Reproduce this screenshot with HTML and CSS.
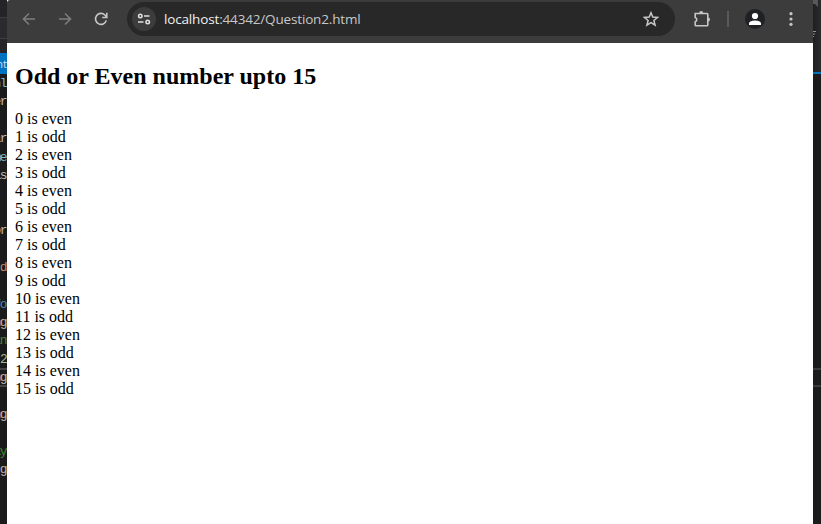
FILE: index.html
```html
<!DOCTYPE html>
<html lang="en">
<head>
<meta charset="utf-8">
<title>Question2</title>
<link rel="stylesheet" href="styles.css">
</head>
<body>
<div class="desktop">
  <div class="editor-left">
    <div class="editor-bars"></div>
    <div class="tab"><span>nt</span></div>
    <div class="code">
      <div class="line attr">nl</div>
      <div class="line">er</div>
      <div class="line"></div>
      <div class="line">ar</div>
      <div class="line attr">me</div>
      <div class="line">is</div>
      <div class="line"></div>
      <div class="line"></div>
      <div class="line">or</div>
      <div class="line"></div>
      <div class="line string">'d</div>
      <div class="line"></div>
      <div class="line keyword">fo</div>
      <div class="line">ng</div>
      <div class="line comment">in</div>
      <div class="line number">2</div>
      <div class="line current">ng</div>
      <div class="line"></div>
      <div class="line">ng</div>
      <div class="line"></div>
      <div class="line comment">ay</div>
      <div class="line">g</div>
    </div>
  </div>
  <div class="browser">
    <header class="toolbar">
      <svg class="icon back" viewBox="0 0 14 14"><path d="M13 7H2M7 1.5 1.5 7 7 12.5"/></svg>
      <svg class="icon forward" viewBox="0 0 14 14"><path d="M1 7h11M7 1.5 12.5 7 7 12.5"/></svg>
      <svg class="icon reload" viewBox="0 0 14 14"><path d="M12.3 8.4A5.5 5.5 0 1 1 10.9 3L12.6 4.8M12.8 .8v4.7H8.2"/></svg>
      <div class="address">
        <span class="site"><svg class="icon tune" viewBox="0 0 14 12"><circle cx="3.3" cy="3" r="1.7"/><path d="M7 3h5.5M1 9h5.5"/><circle cx="10.7" cy="9" r="1.7"/></svg></span>
        <span class="url"><b>localhost</b>:44342/Question2.html</span>
        <svg class="icon star" viewBox="0 0 16 16"><path d="M8 1.7 9.8 6l4.8.4-3.7 3.1 1.2 4.7L8 11.7l-4.1 2.5 1.2-4.7-3.7-3.1L6.2 6z"/></svg>
      </div>
      <svg class="icon puzzle" viewBox="0 0 18 18"><path d="M2.2 3.5H14a.8.8 0 0 1 .8.8V15a.8.8 0 0 1-.8.8H3a.8.8 0 0 1-.8-.8v-3.2a2.2 2.2 0 0 0 0-4.2z"/><path class="solid" d="M6.2 3a2 2 0 0 1 4 0zM15 7.5a2 2 0 0 1 0 4z"/></svg>
      <span class="divider"></span>
      <svg class="avatar" viewBox="0 0 20 20"><circle class="disc" cx="10" cy="10" r="10"/><circle cx="10" cy="7" r="3.1"/><path d="M4 16v-1.6c0-2.3 4-3 6-3s6 .7 6 3V16z"/></svg>
      <svg class="menu" viewBox="0 0 4 14"><circle cx="2" cy="1.7" r="1.6"/><circle cx="2" cy="7" r="1.6"/><circle cx="2" cy="12.3" r="1.6"/></svg>
    </header>
    <main class="page">
      <h2>Odd or Even number upto 15</h2>
      <div>0 is even</div>
      <div>1 is odd</div>
      <div>2 is even</div>
      <div>3 is odd</div>
      <div>4 is even</div>
      <div>5 is odd</div>
      <div>6 is even</div>
      <div>7 is odd</div>
      <div>8 is even</div>
      <div>9 is odd</div>
      <div>10 is even</div>
      <div>11 is odd</div>
      <div>12 is even</div>
      <div>13 is odd</div>
      <div>14 is even</div>
      <div>15 is odd</div>
    </main>
  </div>
  <div class="editor-right">
    <div class="right-top"><svg class="pin" viewBox="0 0 5 7"><path d="M0 0h5v7L2 4H0z"/></svg><svg class="filter" viewBox="0 0 3 6"><path d="M0 .5h3M0 3h2M0 5.5h1"/></svg></div>
    <div class="right-code"></div>
    <div class="right-line"></div>
  </div>
</div>
</body>
</html>
```
FILE: styles.css
```css
body { margin: 0; background: #1e1e1e; overflow: hidden; }
.desktop { display: grid; grid-template-columns: 7px 806px 8px; height: 524px; }

.editor-left { overflow: hidden; background: #1b1b1b; }
.editor-bars {
  height: 53px;
  background: linear-gradient(#242427 0 17px, #3c3c3f 17px 18px, #2b2b2f 18px 38px, #3f3f42 38px 39px, #252527 39px);
}
.tab {
  height: 21px; display: flex; justify-content: flex-end; align-items: center;
  background: #0072c0; color: #cfe3f2; font: 11px "Open Sans", sans-serif;
}
.code { font: 13px "Liberation Mono", monospace; color: #b9b9b9; letter-spacing: -1.6px; }
.line { height: 18.4px; line-height: 20px; display: flex; justify-content: flex-end; white-space: pre; padding-right: 1px; }
.attr { color: #79b9dd; }
.string { color: #bd8d70; }
.keyword { color: #438fc4; }
.comment { color: #438a35; }
.number { color: #a2b891; justify-content: flex-start; }
.current { box-shadow: inset 0 2px #444, inset 0 -2px #444; }

.browser { display: flex; flex-direction: column; background: #fff; }
.toolbar {
  height: 43px; box-sizing: border-box; padding: 0 20px 5px 15px; flex: none;
  display: flex; align-items: center; background: #3c3c3c;
  border-top-left-radius: 3px;
}
.icon { display: block; flex: none; fill: none; stroke: #c7c7c7; stroke-width: 1.6; }
.back, .forward, .reload { width: 14px; height: 14px; }
.back, .forward { stroke: #7d7d7d; }
.forward, .reload { margin-left: 22px; }
.address {
  width: 548px; height: 34px; margin-left: 19px; padding: 0 16px 0 5px; box-sizing: border-box;
  display: flex; align-items: center; border-radius: 17px; background: #282828;
}
.site { width: 24px; height: 24px; border-radius: 50%; background: #3c3c3c; display: grid; place-items: center; }
.tune { width: 14px; height: 12px; stroke: #dedede; }
.url { margin-left: 8px; flex: 1; font: 13.5px/20px "Open Sans", sans-serif; letter-spacing: -0.16px; color: #c7c7c7; white-space: nowrap; }
.url b { font-weight: 400; color: #f0f0f0; }
.star { width: 16px; height: 16px; stroke-width: 1.5; }
.puzzle { width: 18px; height: 18px; margin-left: 18px; }
.puzzle .solid { fill: #c7c7c7; stroke: none; }
.divider { width: 2px; height: 16px; margin-left: 16px; background: #5a5a5a; }
.avatar { width: 20px; height: 20px; margin-left: 16px; fill: #fff; }
.avatar .disc { fill: #202124; }
.menu { width: 4px; height: 14px; margin-left: auto; fill: #c7c7c7; }

.page { padding: 0 8px; font: 16px/18px "Liberation Serif", serif; color: #000; }
.page h2 { margin: 20px 0; font-size: 24px; line-height: 27px; }

.editor-right { background: #1b1b1b; }
.right-top {
  height: 72px; background: linear-gradient(90deg, #1f1f20, #2b2b2d);
  display: flex; flex-direction: column; align-items: flex-start;
}
.pin { width: 5px; height: 7px; fill: #58585a; }
.filter { width: 3px; height: 6px; margin-top: 24px; stroke: #909090; }
.right-code { height: 296px; border-top: 2px solid #0071bd; box-sizing: border-box; }
.right-line { height: 19px; box-sizing: border-box; border-top: 2px solid #3b3b3b; border-bottom: 2px solid #3b3b3b; }
```
